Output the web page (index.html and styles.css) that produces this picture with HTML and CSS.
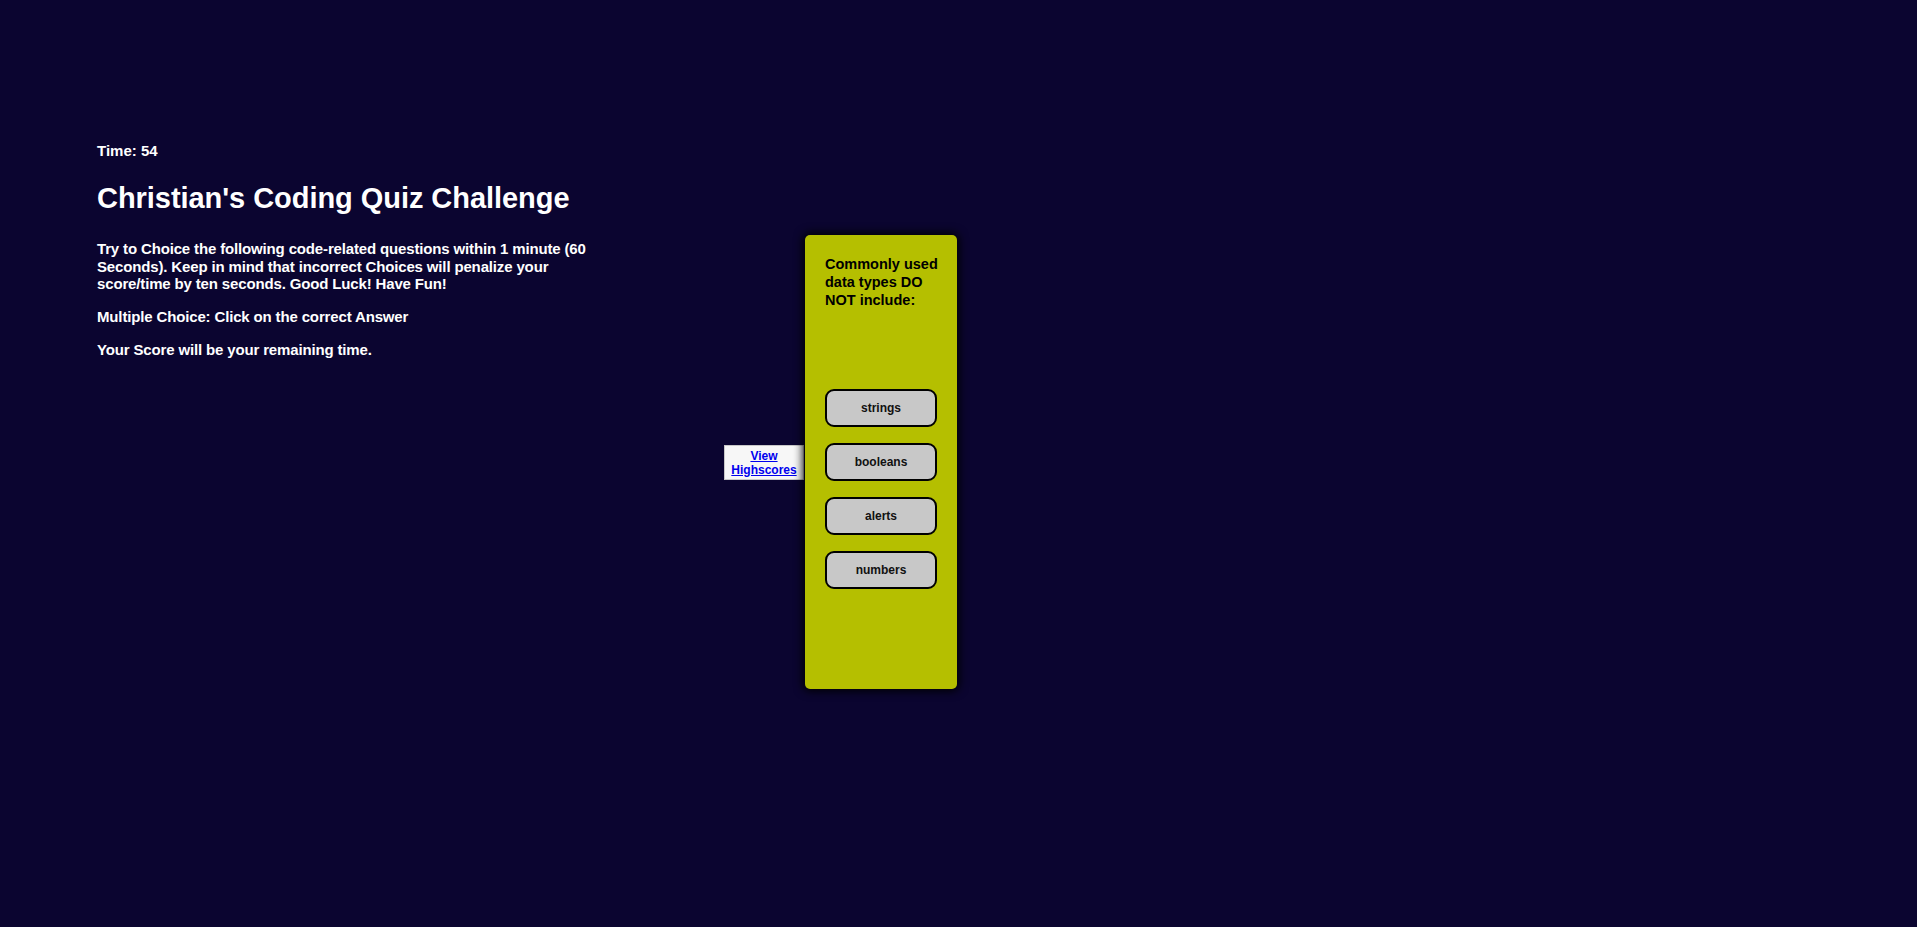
FILE: index.html
```html
<!DOCTYPE html>
<html lang="en">
<head>
<meta charset="utf-8">
<title>Christian's Coding Quiz Challenge</title>
<link rel="stylesheet" href="styles.css">
</head>
<body>
<div class="page">
  <section class="intro">
    <p class="timer">Time: 54</p>
    <h1 class="title">Christian's Coding Quiz Challenge</h1>
    <p class="text">Try to Choice the following code-related questions within 1 minute (60 Seconds). Keep in mind that incorrect Choices will penalize your score/time by ten seconds. Good Luck! Have Fun!</p>
    <p class="text gap">Multiple Choice: Click on the correct Answer</p>
    <p class="text gap">Your Score will be your remaining time.</p>
  </section>
  <section class="side">
    <div class="scores"><a href="#" class="scores-link">View Highscores</a></div>
    <div class="card">
      <p class="question">Commonly used data types DO NOT include:</p>
      <button class="choice">strings</button>
      <button class="choice">booleans</button>
      <button class="choice">alerts</button>
      <button class="choice">numbers</button>
    </div>
  </section>
</div>
</body>
</html>
```
FILE: styles.css
```css
html, body {
  margin: 0;
  padding: 0;
  background: #0b0530;
}
body {
  font-family: "Liberation Sans", Arial, sans-serif;
  font-weight: bold;
  color: #ffffff;
  min-height: 927px;
}
.page {
  display: flex;
  align-items: flex-start;
  padding: 142px 0 0 97px;
}
.intro {
  width: 520px;
}
.timer {
  margin: 0;
  font-size: 15px;
  line-height: 18px;
}
.title {
  margin: 21px 0 0;
  font-size: 29px;
  line-height: 34px;
  letter-spacing: -0.05px;
}
.text {
  margin: 25px 0 0;
  font-size: 15px;
  line-height: 17.5px;
  letter-spacing: -0.15px;
}
.text.gap {
  margin-top: 15.5px;
}
.side {
  display: flex;
  align-items: center;
  margin: 93px 0 0 107px;
}
.scores {
  box-sizing: border-box;
  width: 80px;
  height: 35px;
  padding: 3px 0;
  background: #f7f7f7;
  border: 1px solid #c8c8c8;
  text-align: center;
  font-size: 12px;
  line-height: 14px;
}
.scores-link {
  color: #0000ee;
  text-decoration: underline;
}
.card {
  position: relative;
  z-index: 1;
  box-sizing: border-box;
  width: 152px;
  height: 454px;
  margin-left: 1px;
  padding: 20px 20px;
  background: #b5bf00;
  border-radius: 5px;
  box-shadow: 0 0 10px 2px #000000;
  color: #000000;
}
.question {
  margin: 0 -8px 80px 0;
  font-size: 14.5px;
  line-height: 18px;
}
.choice {
  display: block;
  box-sizing: border-box;
  width: 112px;
  height: 38px;
  margin: 0 0 16px;
  padding: 0;
  background: #c8c8c8;
  border: 2px solid #000000;
  border-radius: 9px;
  font-family: "Liberation Sans", Arial, sans-serif;
  font-weight: bold;
  font-size: 12px;
  color: #111111;
}
```
